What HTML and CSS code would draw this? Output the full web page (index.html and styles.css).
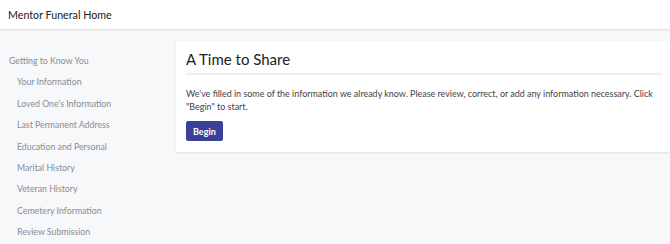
FILE: index.html
```html
<!DOCTYPE html>
<html lang="en">
	<head>
		<meta charset="UTF-8" />
		<meta name="viewport" content="width=device-width, initial-scale=1.0" />
		<title>Mentor Funeral Home</title>
		<link rel="stylesheet" href="styles.css">
	</head>
	<body>
		<header class="topbar">
			<span class="brand">Mentor Funeral Home</span>
		</header>

		<div class="layout">
			<nav class="sidebar">
				<div class="nav-section">Getting to Know You</div>
				<a class="nav-item" href="#">Your Information</a>
				<a class="nav-item" href="#">Loved One's Information</a>
				<a class="nav-item" href="#">Last Permanent Address</a>
				<a class="nav-item" href="#">Education and Personal</a>
				<a class="nav-item" href="#">Marital History</a>
				<a class="nav-item" href="#">Veteran History</a>
				<a class="nav-item" href="#">Cemetery Information</a>
				<a class="nav-item" href="#">Review Submission</a>
			</nav>

			<main class="content">
				<div class="card">
					<h1 class="card-title">A Time to Share</h1>
					<p class="card-text">We've filled in some of the information we already know. Please review, correct, or add any information necessary. Click "Begin" to start.</p>
					<button class="btn-primary">Begin</button>
				</div>
			</main>
		</div>
	</body>
</html>
```

FILE: styles.css
```css
:root {
	--primary: #3a3f9a;
	--muted: #878c95;
	--text: #3f4246;
	--background: #f7f8fa;
}

body {
	margin: 0;
	padding: 0;
	font-family: 'Lato', 'Liberation Sans', sans-serif;
	background: var(--background);
	overflow: hidden;
}

.topbar {
	height: 29px;
	display: flex;
	align-items: center;
	padding: 0 8px;
	background: white;
	box-shadow: 0 1px 2px rgba(0, 0, 0, 0.12);
	position: relative;
}

.brand {
	font-size: 10.7px;
	color: #222;
}

.layout {
	display: flex;
}

.sidebar {
	width: 176px;
	flex-shrink: 0;
	padding-top: 21px;
	display: flex;
	flex-direction: column;
}

.nav-section,
.nav-item {
	font-size: 8.75px;
	line-height: 21.4px;
	color: var(--muted);
	text-decoration: none;
}

.nav-section {
	padding-left: 9px;
}

.nav-item {
	padding-left: 17px;
}

.content {
	flex: 1;
	padding-top: 12px;
	margin-right: -2px;
}

.card {
	background: white;
	padding: 9px 10px 11px 10px;
	box-shadow: 0 1px 2px rgba(0, 0, 0, 0.1);
}

.card-title {
	margin: 0;
	font-size: 15px;
	font-weight: 400;
	line-height: 19px;
	color: #222;
	padding-bottom: 4px;
	border-bottom: 2px solid #eeeff1;
}

.card-text {
	margin: 12px 0 8px 0;
	font-size: 8.95px;
	line-height: 13px;
	color: var(--text);
}

.btn-primary {
	display: block;
	padding: 0 7px;
	height: 20px;
	border-radius: 2px;
	border: none;
	font-family: inherit;
	font-size: 9px;
	font-weight: 700;
	background: var(--primary);
	color: white;
	cursor: pointer;
}
```
